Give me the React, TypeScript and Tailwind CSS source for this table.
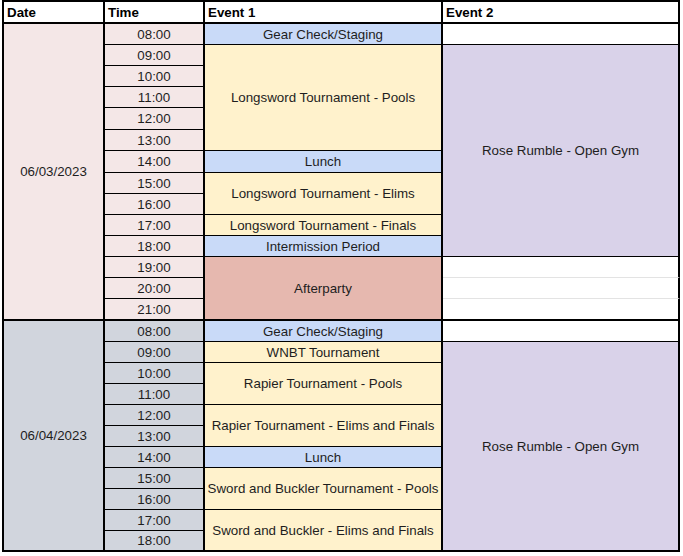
import React from "react";

const BLUE = "bg-[#c9daf8]";
const YEL = "bg-[#fff2cc]";

function Cell({ cls, children }: { cls: string; children?: React.ReactNode }) {
  return (
    <div className={"flex items-center justify-center text-center border-r-2 border-black leading-none whitespace-nowrap pt-px " + cls}>
      {children}
    </div>
  );
}

function Head({ children }: { children: React.ReactNode }) {
  return (
    <div className="flex items-center pl-[3px] pt-px font-bold border-r-2 border-b-2 border-black bg-white text-black leading-none">
      {children}
    </div>
  );
}

export default function App() {
  const d1 = ["08:00", "09:00", "10:00", "11:00", "12:00", "13:00", "14:00", "15:00", "16:00", "17:00", "18:00", "19:00", "20:00", "21:00"];
  const d2 = ["08:00", "09:00", "10:00", "11:00", "12:00", "13:00", "14:00", "15:00", "16:00", "17:00", "18:00"];
  return (
    <div className="min-h-[556px] w-[683px] bg-white text-[13.33px] text-[#1e1e1e]" style={{ fontFamily: '"Liberation Sans", Arial, sans-serif' }}>
      <div className="ml-[2px] w-fit border-l-2 border-t-2 border-black grid grid-cols-[101px_100px_238px_237px] grid-rows-[22px_21px_21px_21px_21px_22px_21px_22px_21px_21px_21px_21px_21px_21px_22px_21px_21px_21px_21px_21px_21px_21px_21px_21px_21px_21px]">
        <Head>Date</Head>
        <Head>Time</Head>
        <Head>Event 1</Head>
        <Head>Event 2</Head>

        {/* Day 1 row 08 */}
        <Cell cls="row-span-14 border-b-2 bg-[#f4e7e7]">06/03/2023</Cell>
        <Cell cls="border-b bg-[#f4e7e7]">{d1[0]}</Cell>
        <Cell cls={"border-b " + BLUE}>Gear Check/Staging</Cell>
        <Cell cls="border-b bg-white"></Cell>
        {/* 09 */}
        <Cell cls="border-b bg-[#f4e7e7]">{d1[1]}</Cell>
        <Cell cls={"row-span-5 border-b " + YEL}>Longsword Tournament - Pools</Cell>
        <Cell cls="row-span-10 border-b bg-[#d9d2e9]">Rose Rumble - Open Gym</Cell>
        {/* 10-13 */}
        <Cell cls="border-b bg-[#f4e7e7]">{d1[2]}</Cell>
        <Cell cls="border-b bg-[#f4e7e7]">{d1[3]}</Cell>
        <Cell cls="border-b bg-[#f4e7e7]">{d1[4]}</Cell>
        <Cell cls="border-b bg-[#f4e7e7]">{d1[5]}</Cell>
        {/* 14 */}
        <Cell cls="border-b bg-[#f4e7e7]">{d1[6]}</Cell>
        <Cell cls={"border-b " + BLUE}>Lunch</Cell>
        {/* 15 */}
        <Cell cls="border-b bg-[#f4e7e7]">{d1[7]}</Cell>
        <Cell cls={"row-span-2 border-b " + YEL}>Longsword Tournament - Elims</Cell>
        {/* 16 */}
        <Cell cls="border-b bg-[#f4e7e7]">{d1[8]}</Cell>
        {/* 17 */}
        <Cell cls="border-b bg-[#f4e7e7]">{d1[9]}</Cell>
        <Cell cls={"border-b " + YEL}>Longsword Tournament - Finals</Cell>
        {/* 18 */}
        <Cell cls="border-b bg-[#f4e7e7]">{d1[10]}</Cell>
        <Cell cls={"border-b " + BLUE}>Intermission Period</Cell>
        {/* 19 */}
        <Cell cls="border-b bg-[#f4e7e7]">{d1[11]}</Cell>
        <Cell cls="row-span-3 border-b-2 bg-[#e6b8af]">Afterparty</Cell>
        <Cell cls="border-b border-b-[#e3e3e3] bg-white"></Cell>
        {/* 20 */}
        <Cell cls="border-b bg-[#f4e7e7]">{d1[12]}</Cell>
        <Cell cls="border-b border-b-[#e3e3e3] bg-white"></Cell>
        {/* 21 */}
        <Cell cls="border-b-2 bg-[#f4e7e7]">{d1[13]}</Cell>
        <Cell cls="border-b-2 bg-white"></Cell>

        {/* Day 2 row 08 */}
        <Cell cls="row-span-11 border-b-2 bg-[#d1d5dd]">06/04/2023</Cell>
        <Cell cls="border-b bg-[#d1d5dd]">{d2[0]}</Cell>
        <Cell cls={"border-b " + BLUE}>Gear Check/Staging</Cell>
        <Cell cls="border-b bg-white"></Cell>
        {/* 09 */}
        <Cell cls="border-b bg-[#d1d5dd]">{d2[1]}</Cell>
        <Cell cls={"border-b " + YEL}>WNBT Tournament</Cell>
        <Cell cls="row-span-10 border-b-2 bg-[#d9d2e9]">Rose Rumble - Open Gym</Cell>
        {/* 10 */}
        <Cell cls="border-b bg-[#d1d5dd]">{d2[2]}</Cell>
        <Cell cls={"row-span-2 border-b " + YEL}>Rapier Tournament - Pools</Cell>
        {/* 11 */}
        <Cell cls="border-b bg-[#d1d5dd]">{d2[3]}</Cell>
        {/* 12 */}
        <Cell cls="border-b bg-[#d1d5dd]">{d2[4]}</Cell>
        <Cell cls={"row-span-2 border-b " + YEL}>Rapier Tournament - Elims and Finals</Cell>
        {/* 13 */}
        <Cell cls="border-b bg-[#d1d5dd]">{d2[5]}</Cell>
        {/* 14 */}
        <Cell cls="border-b bg-[#d1d5dd]">{d2[6]}</Cell>
        <Cell cls={"border-b " + BLUE}>Lunch</Cell>
        {/* 15 */}
        <Cell cls="border-b bg-[#d1d5dd]">{d2[7]}</Cell>
        <Cell cls={"row-span-2 border-b " + YEL}>Sword and Buckler Tournament - Pools</Cell>
        {/* 16 */}
        <Cell cls="border-b bg-[#d1d5dd]">{d2[8]}</Cell>
        {/* 17 */}
        <Cell cls="border-b bg-[#d1d5dd]">{d2[9]}</Cell>
        <Cell cls={"row-span-2 border-b-2 " + YEL}>Sword and Buckler - Elims and Finals</Cell>
        {/* 18 */}
        <Cell cls="border-b-2 bg-[#d1d5dd]">{d2[10]}</Cell>
      </div>
    </div>
  );
}
